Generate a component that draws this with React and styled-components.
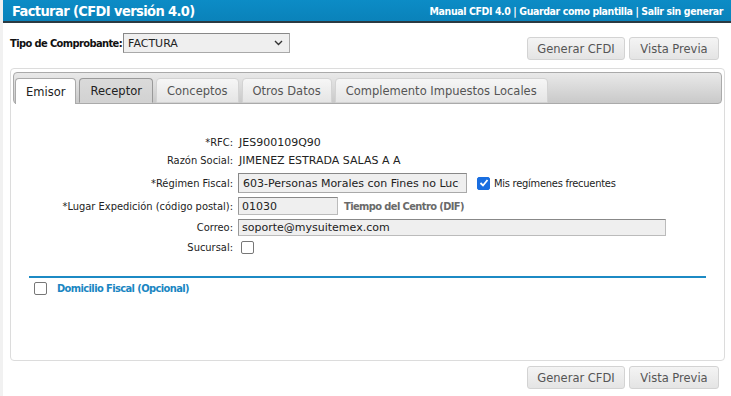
import React from "react";
import styled, { createGlobalStyle } from "styled-components";

const GlobalStyle = createGlobalStyle`
  html, body { margin: 0; padding: 0; background: #fff; }
  body {
    font-family: "DejaVu Sans", Verdana, sans-serif;
    font-size: 11px;
    color: #222;
  }
  * { box-sizing: border-box; }
`;

const LABEL_FONT = `"DejaVu Sans Condensed", "DejaVu Sans", Tahoma, sans-serif`;

const Page = styled.div`
  width: 731px;
  height: 396px;
  position: relative;
  border-left: 3px solid #f1f1f1;
  overflow: hidden;
`;

const Header = styled.div`
  height: 23px;
  margin-left: -3px;
  background: linear-gradient(#0c8cc6, #0a82ba);
  border-bottom: 2px solid #2b3a42;
  display: flex;
  align-items: center;
  justify-content: space-between;
  padding: 0 8px 0 12px;
  color: #fff;
`;

const Title = styled.h1`
  margin: 0;
  font-family: ${LABEL_FONT};
  font-size: 14.5px;
  font-weight: bold;
  letter-spacing: -0.6px;
`;

const Links = styled.div`
  font-family: ${LABEL_FONT};
  font-size: 10.5px;
  font-weight: bold;
  letter-spacing: -0.4px;
`;

const Toolbar = styled.div`
  display: flex;
  justify-content: space-between;
  padding: 10px 12px 0 7px;
  height: 45px;
`;

const TipoGroup = styled.div`
  display: flex;
  align-items: center;
  gap: 1px;
  height: 20px;
`;

const BoldLabel = styled.span`
  font-family: ${LABEL_FONT};
  font-weight: bold;
  font-size: 11px;
  letter-spacing: -0.6px;
  color: #111;
`;

const SelectBox = styled.div`
  width: ${(p) => p.$w}px;
  height: ${(p) => p.$h}px;
  background: #efefef;
  border: 1px solid #a9a9a9;
  border-top-color: #888;
  border-left-color: #888;
  display: flex;
  align-items: center;
  justify-content: space-between;
  padding: 0 6px 0 4px;
  font-size: 11px;
  color: #222;
  white-space: nowrap;
  overflow: hidden;
`;

const Chevron = () => (
  <svg width="9" height="6" viewBox="0 0 9 6">
    <polyline points="1,1 4.5,4.5 8,1" fill="none" stroke="#333" strokeWidth="1.4" />
  </svg>
);

const ButtonGroup = styled.div`
  display: flex;
  gap: 4px;
  margin-top: ${(p) => p.$top || 0}px;
  justify-content: flex-end;
`;

const Button = styled.button`
  width: ${(p) => p.$w}px;
  height: 23px;
  border: 1px solid #d3d3d3;
  border-radius: 3px;
  background: linear-gradient(#f4f4f4, #e4e4e4);
  color: #555;
  font-family: "DejaVu Sans", Verdana, sans-serif;
  font-size: 11.5px;
  padding: 0;
`;

const Panel = styled.div`
  margin: 0 6px 0 7px;
  height: 293px;
  border: 1px solid #dcdcdc;
  border-radius: 4px;
  padding: 3px 2px;
`;

const TabBar = styled.div`
  height: 32px;
  border: 1px solid #aaa;
  border-radius: 4px;
  background: linear-gradient(#e9e9e9, #c9c9c9);
  display: flex;
  align-items: flex-end;
  gap: 3px;
  padding: 0 0 0 1px;
`;

const Tab = styled.div`
  height: ${(p) => (p.$active ? 26 : 25)}px;
  margin-bottom: ${(p) => (p.$active ? -1 : 0)}px;
  padding: 0 10px;
  display: flex;
  align-items: center;
  border: 1px solid ${(p) => (p.$active ? "#aaa" : p.$hover ? "#999" : "#d3d3d3")};
  border-bottom: ${(p) => (p.$active ? "none" : "1px solid #d3d3d3")};
  border-radius: 4px 4px 0 0;
  background: ${(p) =>
    p.$active ? "#fff" : p.$hover ? "linear-gradient(#dadada, #d2d2d2)" : "linear-gradient(#f6f6f6, #e5e5e5)"};
  color: ${(p) => (p.$active || p.$hover ? "#212121" : "#555")};
  font-size: 11.5px;
  white-space: nowrap;
`;

const Form = styled.div`
  display: flex;
  flex-direction: column;
  margin-top: 29px;
`;

const FieldRow = styled.div`
  display: flex;
  align-items: center;
  height: ${(p) => p.$h}px;
`;

const Label = styled.span`
  width: 225px;
  text-align: right;
  padding-right: 5px;
  font-family: ${LABEL_FONT};
  font-size: 11px;
  color: #222;
  flex-shrink: 0;
`;

const Value = styled.span`
  font-size: 11px;
  color: #222;
  padding-left: 1px;
`;

const TextInput = styled.div`
  width: ${(p) => p.$w}px;
  height: ${(p) => p.$h}px;
  background: #efefef;
  border: 1px solid #bbb;
  border-top-color: #888;
  border-left-color: #999;
  display: flex;
  align-items: center;
  padding-left: 3px;
  font-size: 11px;
  color: #222;
`;

const Hint = styled.span`
  margin-left: 6px;
  font-family: ${LABEL_FONT};
  font-weight: bold;
  font-size: 11px;
  letter-spacing: -0.6px;
  color: #6a6a6a;
`;

const Check = styled.span`
  width: 13px;
  height: 13px;
  border: 1.5px solid ${(p) => (p.$checked ? "#1a6ee0" : "#777")};
  border-radius: 2px;
  background: ${(p) => (p.$checked ? "#1a6ee0" : "#fff")};
  display: inline-flex;
  align-items: center;
  justify-content: center;
  margin-left: ${(p) => p.$ml || 0}px;
  flex-shrink: 0;
`;

const CheckLabel = styled.span`
  margin-left: 4px;
  font-family: ${LABEL_FONT};
  font-size: 11px;
  letter-spacing: -0.25px;
  color: #222;
`;

const Divider = styled.div`
  margin: 21px 16px 0 16px;
  height: 2px;
  background: #1c8ac4;
`;

const SectionRow = styled.div`
  display: flex;
  align-items: center;
  height: 16px;
  margin-top: 2px;
  padding-left: 21px;
`;

const SectionTitle = styled.span`
  margin-left: 10px;
  font-family: ${LABEL_FONT};
  font-weight: bold;
  font-size: 11px;
  letter-spacing: -0.6px;
  color: #1a86c2;
`;

const Footer = styled.div`
  padding: 5px 12px 0 0;
`;

const Tick = () => (
  <svg width="10" height="10" viewBox="0 0 10 10">
    <polyline points="1.5,5 4,7.5 8.5,2" fill="none" stroke="#fff" strokeWidth="1.8" />
  </svg>
);

const tabs = ["Emisor", "Receptor", "Conceptos", "Otros Datos", "Complemento Impuestos Locales"];

export default function App() {
  return (
    <>
      <GlobalStyle />
      <Page>
        <Header>
          <Title>Facturar (CFDI versión 4.0)</Title>
          <Links>Manual CFDI 4.0 | Guardar como plantilla | Salir sin generar</Links>
        </Header>
        <Toolbar>
          <TipoGroup>
            <BoldLabel>Tipo de Comprobante:</BoldLabel>
            <SelectBox $w={167} $h={20}>
              FACTURA
              <Chevron />
            </SelectBox>
          </TipoGroup>
          <ButtonGroup $top={4}>
            <Button $w={98}>Generar CFDI</Button>
            <Button $w={90}>Vista Previa</Button>
          </ButtonGroup>
        </Toolbar>
        <Panel>
          <TabBar>
            {tabs.map((t, i) => (
              <Tab key={t} $active={i === 0} $hover={i === 1}>
                {t}
              </Tab>
            ))}
          </TabBar>
          <Form>
            <FieldRow $h={18}>
              <Label>*RFC:</Label>
              <Value>JES900109Q90</Value>
            </FieldRow>
            <FieldRow $h={18}>
              <Label>Razón Social:</Label>
              <Value>JIMENEZ ESTRADA SALAS A A</Value>
            </FieldRow>
            <FieldRow $h={28}>
              <Label>*Régimen Fiscal:</Label>
              <SelectBox $w={229} $h={20}>
                603-Personas Morales con Fines no Luc
                <Chevron />
              </SelectBox>
              <Check $checked $ml={10}>
                <Tick />
              </Check>
              <CheckLabel>Mis regímenes frecuentes</CheckLabel>
            </FieldRow>
            <FieldRow $h={18}>
              <Label>*Lugar Expedición (código postal):</Label>
              <TextInput $w={100} $h={18}>01030</TextInput>
              <Hint>Tiempo del Centro (DIF)</Hint>
            </FieldRow>
            <FieldRow $h={24}>
              <Label>Correo:</Label>
              <TextInput $w={428} $h={17}>soporte@mysuitemex.com</TextInput>
            </FieldRow>
            <FieldRow $h={16}>
              <Label>Sucursal:</Label>
              <Check $ml={3} />
            </FieldRow>
          </Form>
          <Divider />
          <SectionRow>
            <Check />
            <SectionTitle>Domicilio Fiscal (Opcional)</SectionTitle>
          </SectionRow>
        </Panel>
        <Footer>
          <ButtonGroup>
            <Button $w={98}>Generar CFDI</Button>
            <Button $w={90}>Vista Previa</Button>
          </ButtonGroup>
        </Footer>
      </Page>
    </>
  );
}
